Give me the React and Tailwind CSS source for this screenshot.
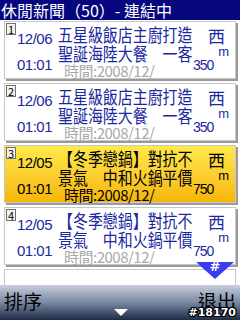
import React from "react";

const F = { fontFamily: '"Noto Sans CJK TC", "Noto Sans CJK SC", sans-serif' };
const L = { fontFamily: '"Liberation Sans", sans-serif' };

function Card({ n, date, l1, l2, dist, hi }) {
  const txt = hi ? "text-black" : "text-[#1c28a0]";
  const sub = hi ? "text-black" : "text-[#a8a8a8]";
  return (
    <div
      className={`relative h-[58px] shrink-0 mx-[4px] border border-[#c8c8c8] shadow-[2px_2px_0_#9a9a9a] flex ${
        hi ? "bg-gradient-to-b from-[#ffe94a] to-[#f6b600]" : "bg-white"
      }`}
    >
      <div className="w-[11px] shrink-0 pt-[1px] pl-[1px]">
        <div className="w-[10px] h-[12px] border border-[#707070] bg-[#f4f4ec] text-black text-[11px] leading-[10px] flex items-center justify-center" style={F}>
          {n}
        </div>
      </div>
      <div className={`w-[42px] shrink-0 flex flex-col pl-[1px] ${txt}`} style={L}>
        <div className="text-[15px] leading-[15px] tracking-[-0.5px] mt-[9px]">{date}</div>
        <div className="text-[15px] leading-[15px] tracking-[-0.5px] mt-[11px]">01:01</div>
      </div>
      <div className="w-[135px] shrink-0 flex flex-col" style={F}>
        <div className={`text-[18px] leading-[19px] mt-[3px] whitespace-nowrap origin-left scale-x-[0.83] ${txt}`}>{l1}</div>
        <div className={`text-[18px] leading-[19px] whitespace-nowrap origin-left scale-x-[0.83] ${txt}`}>{l2}</div>
        <div className={`text-[15px] leading-[15px] tracking-[-0.5px] pl-[6px] whitespace-nowrap ${sub}`}>時間:2008/12/</div>
      </div>
      <div className={`flex-1 ${txt}`} style={F}>
        <div className="text-[17px] leading-[18px] pl-[15px] mt-[5px]">西</div>
        <div className="flex items-start">
          <div className="text-[14px] leading-[14px] tracking-[-1px] mt-[13px]" style={L}>{dist}</div>
          <div className="text-[13px] leading-[12px] mt-[1px] ml-[5px]" style={L}>m</div>
        </div>
      </div>
    </div>
  );
}

export default function App() {
  const items = [
    { n: 1, date: "12/06", l1: "五星級飯店主廚打造", l2: "聖誕海陸大餐　一客", dist: "350" },
    { n: 2, date: "12/06", l1: "五星級飯店主廚打造", l2: "聖誕海陸大餐　一客", dist: "350" },
    { n: 3, date: "12/05", l1: "【冬季戀鍋】對抗不", l2: "景氣　中和火鍋平價", dist: "750", hi: true },
    { n: 4, date: "12/05", l1: "【冬季戀鍋】對抗不", l2: "景氣　中和火鍋平價", dist: "750" },
  ];
  return (
    <div className="w-[240px] h-[320px] overflow-hidden bg-white flex flex-col relative" style={F}>
      <div className="h-[20px] shrink-0 bg-[#06067e] text-white text-[16px] leading-[20px] pl-[1px] whitespace-nowrap overflow-hidden">
        休閒新聞（50）- 連結中
      </div>
      <div className="flex-1 flex flex-col gap-[4px] pt-[1px] overflow-hidden relative">
        {items.map((it) => (
          <Card key={it.n} {...it} />
        ))}
        <div className="h-[58px] shrink-0 mx-[4px] border border-[#c8c8c8] bg-white" />
        <div className="absolute left-[196px] top-[242px] w-[38px] h-[17px]">
          <svg width="38" height="17" viewBox="0 0 38 17" className="absolute inset-0">
            <polygon points="0,0 38,0 19,17" fill="#3b3bf0" />
          </svg>
          <div className="absolute left-0 right-0 top-[-2px] text-center text-white font-bold text-[13px] leading-[14px]" style={{ fontFamily: '"DejaVu Sans", sans-serif' }}>
            #
          </div>
        </div>
      </div>
      <div className="h-[35px] shrink-0 bg-gradient-to-b from-[#c9cfdc] via-[#7a88a3] to-[#1f2c48] flex items-center justify-between px-[4px] relative">
        <div className="text-black text-[19px] leading-[20px] -mt-[4px]">排序</div>
        <svg width="14" height="7" viewBox="0 0 14 7" className="absolute left-[114px] top-[24px]">
          <polygon points="0,0 14,0 7,7" fill="#ffffff" />
        </svg>
        <div className="text-black text-[19px] leading-[20px] -mt-[4px]">退出</div>
        <div
          className="absolute right-[4px] bottom-[1px] text-white font-bold text-[11px] leading-[12px]"
          style={{ fontFamily: '"DejaVu Sans", sans-serif', textShadow: "1px 0 0 #000, -1px 0 0 #000, 0 1px 0 #000, 0 -1px 0 #000, 1px 1px 0 #000, -1px -1px 0 #000, 1px -1px 0 #000, -1px 1px 0 #000" }}
        >
          #18170
        </div>
      </div>
    </div>
  );
}
